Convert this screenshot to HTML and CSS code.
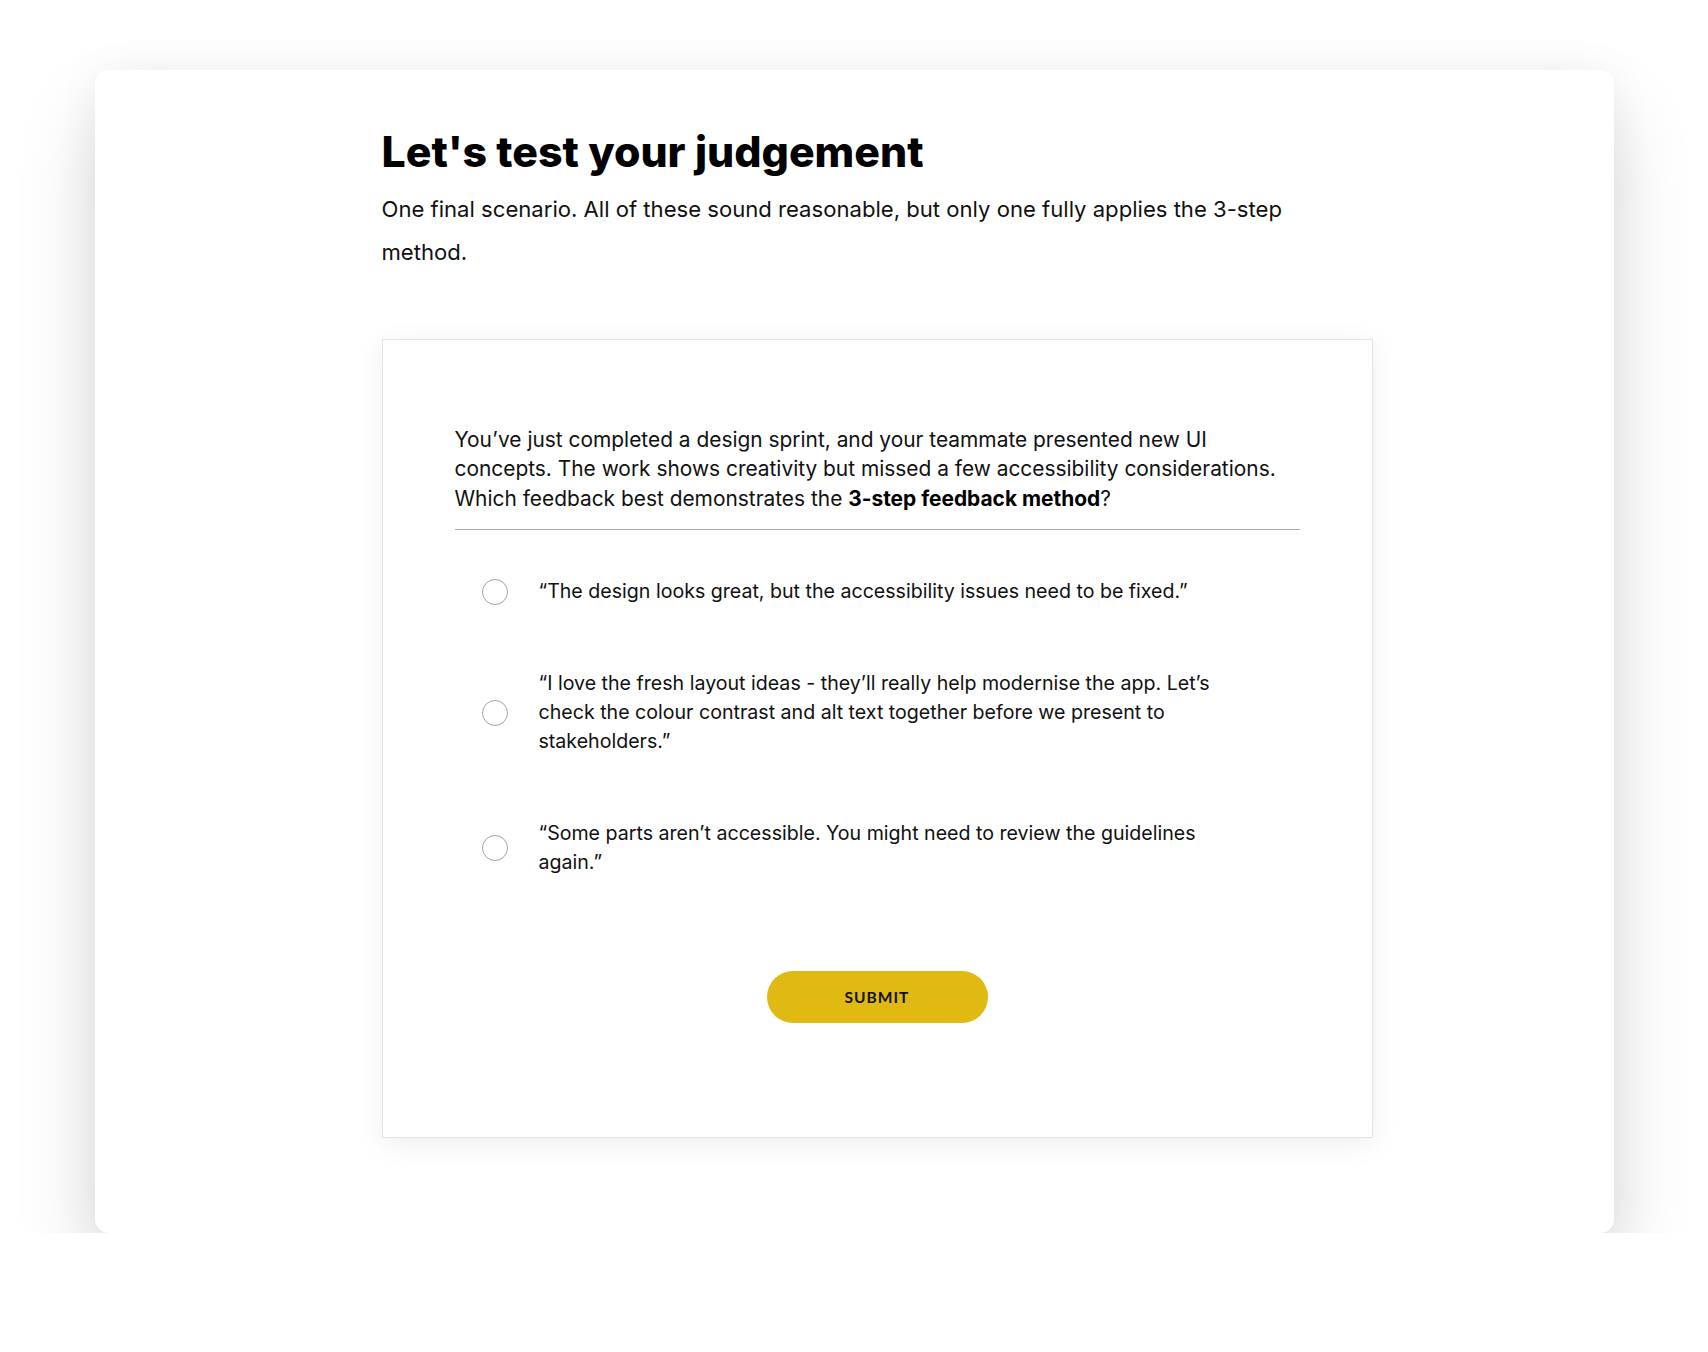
FILE: index.html
```html
<!DOCTYPE html>
<html lang="en">
<head>
<meta charset="utf-8">
<title>Let's test your judgement</title>
<link rel="stylesheet" href="styles.css">
</head>
<body>
  <main class="panel">
    <h1 class="title">Let's test your judgement</h1>
    <p class="intro">One final scenario. All of these sound reasonable, but only one fully applies the 3-step method.</p>

    <section class="card">
      <p class="question">You’ve just completed a design sprint, and your teammate presented new UI concepts. The work shows creativity but missed a few accessibility considerations. Which feedback best demonstrates the <strong>3-step feedback method</strong>?</p>

      <div class="options">
        <label class="option">
          <input type="radio" name="answer" class="radio">
          <span class="option-text">“The design looks great, but the accessibility issues need to be fixed.”</span>
        </label>
        <label class="option">
          <input type="radio" name="answer" class="radio">
          <span class="option-text">“I love the fresh layout ideas - they’ll really help modernise the app. Let’s check the colour contrast and alt text together before we present to stakeholders.”</span>
        </label>
        <label class="option">
          <input type="radio" name="answer" class="radio">
          <span class="option-text">“Some parts aren’t accessible. You might need to review the guidelines again.”</span>
        </label>
      </div>

      <div class="actions">
        <button type="button" class="submit">SUBMIT</button>
      </div>
    </section>
  </main>
</body>
</html>
```

FILE: styles.css
```css
* {
  box-sizing: border-box;
}

html, body {
  margin: 0;
  padding: 0;
  background: #ffffff;
}

body {
  font-family: "Inter", "Liberation Sans", sans-serif;
  color: #111111;
  padding-top: 70px;
}

.panel {
  width: 1519px;
  height: 1163px;
  margin: 0 auto;
  background: #ffffff;
  border-radius: 14px;
  box-shadow: 0 44px 80px rgba(0, 0, 0, 0.15), 0 0 44px rgba(0, 0, 0, 0.05);
  padding: 58px 0 0 287px;
}

.title {
  margin: 0;
  font-family: "Inter", sans-serif;
  font-weight: 800;
  font-size: 42.8px;
  line-height: 48px;
  letter-spacing: 0;
  color: #000000;
}

.intro {
  margin: 12px 0 0;
  width: 930px;
  font-size: 22.1px;
  line-height: 43px;
  color: #111111;
}

.card {
  margin-top: 65px;
  width: 991px;
  height: 799px;
  border: 1px solid #e2e2e2;
  background: #ffffff;
  box-shadow: 0 6px 26px rgba(0, 0, 0, 0.07);
  padding: 85px 72px 0 72px;
  display: flex;
  flex-direction: column;
}

.question {
  margin: 0;
  font-size: 20.9px;
  line-height: 29.4px;
  color: #111111;
  padding-bottom: 16px;
  border-bottom: 1.5px solid #ababab;
}

.question strong {
  font-weight: 700;
  color: #000000;
}

.options {
  margin-top: 47px;
  display: flex;
  flex-direction: column;
  gap: 62px;
}

.option {
  display: flex;
  align-items: center;
  padding-left: 27px;
  cursor: pointer;
}

.radio {
  appearance: none;
  -webkit-appearance: none;
  margin: 0 31px 0 0;
  width: 26px;
  height: 26px;
  flex: none;
  border: 1.5px solid #a3a3a3;
  border-radius: 50%;
  background: #ffffff;
}

.option-text {
  max-width: 697px;
  font-size: 19.6px;
  line-height: 29.4px;
  color: #111111;
}

.actions {
  margin-top: 93px;
  display: flex;
  justify-content: center;
}

.submit {
  width: 221px;
  height: 52px;
  border: none;
  border-radius: 26px;
  background: #e0b912;
  color: #111111;
  font-family: "Lato", sans-serif;
  font-weight: 700;
  font-size: 15.5px;
  letter-spacing: 1px;
  cursor: pointer;
}
```
